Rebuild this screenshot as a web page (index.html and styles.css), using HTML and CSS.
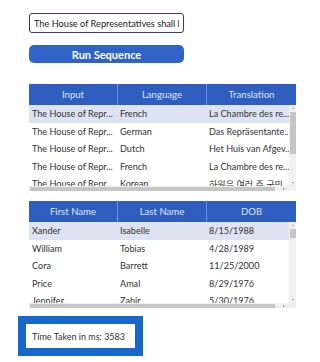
FILE: index.html
```html
<!DOCTYPE html>
<html lang="en">
<head>
  <meta charset="UTF-8" />
  <title>Translate Sequence</title>
  <link rel="stylesheet" href="styles.css">
</head>
<body>
  <div class="app">
    <input type="text" class="source" value="The House of Representatives shall be composed of Members" />
    <button class="run">Run Sequence</button>

    <div class="grid">
      <div class="head">
        <div>Input</div>
        <div>Language</div>
        <div>Translation</div>
      </div>
      <div class="body">
        <div class="rows">
          <div class="row selected"><span>The House of Repr...</span><span>French</span><span>La Chambre des re...</span></div>
          <div class="row"><span>The House of Repr...</span><span>German</span><span>Das Repräsentante..</span></div>
          <div class="row"><span>The House of Repr...</span><span>Dutch</span><span>Het Huis van Afgev...</span></div>
          <div class="row"><span>The House of Repr...</span><span>French</span><span>La Chambre des re...</span></div>
          <div class="row"><span>The House of Repr...</span><span>Korean</span><span>하원은 여러 주 국민</span></div>
        </div>
        <div class="vbar">
          <i class="up"></i>
          <div class="thumb tall"></div>
          <i class="down"></i>
        </div>
      </div>
      <div class="hbar"><div class="hthumb"></div><i class="right"></i></div>
    </div>

    <div class="grid">
      <div class="head">
        <div>First Name</div>
        <div>Last Name</div>
        <div>DOB</div>
      </div>
      <div class="body">
        <div class="rows">
          <div class="row selected"><span>Xander</span><span>Isabelle</span><span>8/15/1988</span></div>
          <div class="row"><span>William</span><span>Tobias</span><span>4/28/1989</span></div>
          <div class="row"><span>Cora</span><span>Barrett</span><span>11/25/2000</span></div>
          <div class="row"><span>Price</span><span>Amal</span><span>8/29/1976</span></div>
          <div class="row"><span>Jennifer</span><span>Zahir</span><span>5/30/1976</span></div>
        </div>
        <div class="vbar">
          <i class="up"></i>
          <div class="thumb short"></div>
          <i class="down"></i>
        </div>
      </div>
      <div class="hbar"><div class="hthumb"></div><i class="right"></i></div>
    </div>

    <div class="timer">
      <div class="timer-text">Time Taken in ms: 3583</div>
    </div>
  </div>
</body>
</html>
```

FILE: styles.css
```css
* {
  box-sizing: border-box;
}

body {
  margin: 0;
  background: #fff;
  font-family: Lato, 'Noto Sans CJK KR', sans-serif;
  color: #333;
}

.app {
  width: 320px;
  height: 362px;
  padding-top: 13px;
  display: flex;
  flex-direction: column;
}

.source {
  margin-left: 29px;
  width: 155px;
  height: 20px;
  border: 1.5px solid #3d3b6e;
  border-radius: 3px;
  padding: 0 4px;
  font-family: Lato, sans-serif;
  font-size: 9.2px;
  color: #222;
}

.run {
  margin: 12px 0 0 29px;
  width: 155px;
  height: 18px;
  border: none;
  border-radius: 5px;
  background: #2f63c7;
  color: #fff;
  font-family: Lato, sans-serif;
  font-size: 11px;
  font-weight: 700;
  padding: 0;
}

.grid {
  margin: 21px 0 0 29px;
  width: 267px;
}

.grid + .grid {
  margin-top: 10px;
}

.head {
  display: grid;
  grid-template-columns: 88px 89px 90px;
  height: 21px;
  background: #2f5ec0;
  color: #dfe7f7;
  font-size: 9.6px;
}

.head div {
  display: flex;
  align-items: center;
  justify-content: center;
  border-left: 1px solid #6d8fd6;
}

.head div:first-child {
  border-left: none;
}

.body {
  display: flex;
  height: 81px;
}

.rows {
  width: 260px;
  overflow: hidden;
}

.row {
  display: grid;
  grid-template-columns: 88px 89px 83px;
  height: 17.5px;
  align-items: center;
  font-size: 9.1px;
  white-space: nowrap;
}

.row span {
  padding-left: 3px;
}

.row.selected {
  background: #dde3f1;
}

.vbar {
  width: 7px;
  background: #f1f1f1;
  display: flex;
  flex-direction: column;
  align-items: center;
  padding: 2px 0;
}

.vbar .up,
.vbar .down {
  width: 0;
  height: 0;
  border-left: 1.5px solid transparent;
  border-right: 1.5px solid transparent;
}

.vbar .up {
  border-bottom: 2px solid #999;
}

.vbar .down {
  border-top: 2px solid #999;
  margin-top: auto;
}

.thumb {
  width: 6px;
  background: #c5c5c5;
  margin-top: 3px;
}

.thumb.tall {
  height: 42px;
}

.thumb.short {
  height: 9px;
}

.hbar {
  height: 5px;
  background: #efefef;
  display: flex;
  align-items: center;
}

.hthumb {
  margin-left: 1px;
  width: 245px;
  height: 4px;
  background: #c6c6c6;
}

.hbar .right {
  margin-left: 8px;
  width: 0;
  height: 0;
  border-top: 1.5px solid transparent;
  border-bottom: 1.5px solid transparent;
  border-left: 2px solid #888;
}

.timer {
  margin: 8px 0 0 18px;
  width: 125px;
  height: 40px;
  border: 8px solid #1868cb;
  background: #fff;
  display: flex;
  align-items: center;
  padding-left: 6px;
}

.timer-text {
  font-size: 9px;
  color: #333;
}
```
